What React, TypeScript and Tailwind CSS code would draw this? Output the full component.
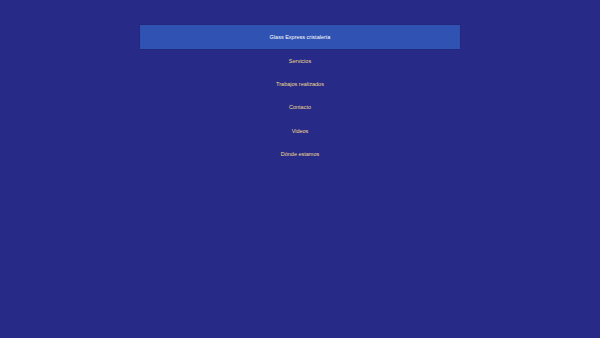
const items = ['Servicios', 'Trabajos realizados', 'Contacto', 'Videos', 'Dónde estamos'];

export default function App() {
  return (
    <div
      className="min-h-[338px] w-full bg-[#272a87] pt-[25px]"
      style={{ fontFamily: '"Liberation Sans", Arial, sans-serif' }}
    >
      <nav className="mx-auto flex w-[320px] flex-col">
        <div className="flex h-6 items-center justify-center bg-[#3053b3] text-[5.5px] text-white shadow-[0_0_1px_rgba(0,0,0,0.4)]">
          Glass Express cristalería
        </div>
        {items.map((item) => (
          <a
            key={item}
            href="#"
            className="flex h-[23.33px] items-center justify-center text-[5.5px] text-[#f0da8e]"
          >
            {item}
          </a>
        ))}
      </nav>
    </div>
  );
}
